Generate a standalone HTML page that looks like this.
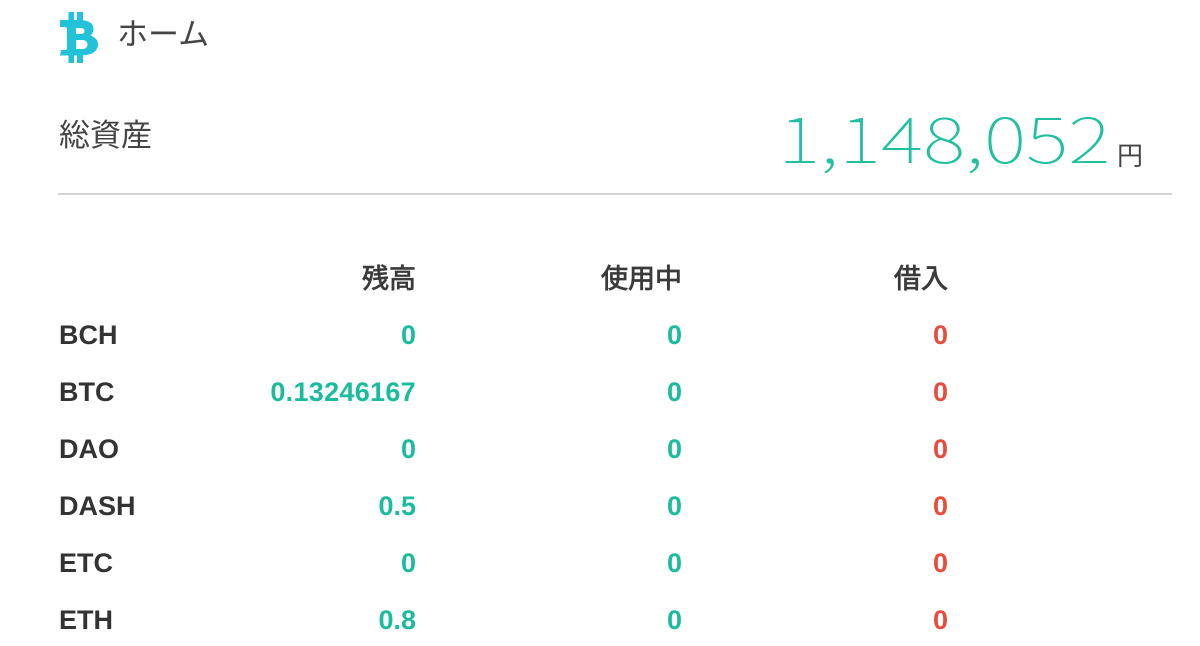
<!DOCTYPE html>
<html lang="ja">
<head>
<meta charset="utf-8">
<style>
html,body{margin:0;padding:0;background:#fff}
body{width:1200px;height:646px;position:relative;overflow:hidden;font-family:"Liberation Sans","Noto Sans CJK JP",sans-serif;color:#333}
.a{position:absolute;white-space:nowrap;line-height:1}
.r{text-align:right}
.b{font-weight:700;font-size:27px}
.h{font-weight:400;font-size:27px;color:#3a3a3a;top:266px;-webkit-text-stroke:.8px #3a3a3a}
.g{color:#1abc9c}
.e{color:#e74c3c}
.c1{left:59px}
.c2{right:784px}
.c3{right:518px}
.c4{right:252px}
</style>
</head>
<body>
<svg class="a" style="left:0;top:0" width="110" height="70" viewBox="0 0 110 70">
<path fill="#22c3d8" fill-rule="evenodd" d="M60 20H68.500V12H74V20H77V12H83V20.300C89.500 21 93.500 24 93.500 29C93.500 32 92 34.500 90.500 35.800C95 37 98 40 98 44.500C98 51 92 55 83 55.300V63H77V55.500H74V63H68.500V55.500H60L61 50H65Q67 50 67 48V29Q67 27 65 27H60ZM76 28V34H80.500C83.500 34 84.500 32.500 84.500 31C84.500 29.500 83.500 28 80.500 28ZM76 40V49H82C85.500 49 87.500 47.300 87.500 44.500C87.500 41.700 85.500 40 82 40Z"/>
</svg>
<div class="a" style="left:117px;top:19px;font-size:31px;font-weight:400;color:#444">ホーム</div>
<div class="a" style="left:59px;top:120px;font-size:31px;font-weight:400;color:#444">総資産</div>
<div class="a g" style="left:778px;top:105px;font-family:'Noto Sans CJK JP','DejaVu Sans',sans-serif;font-size:62px;font-weight:100;color:#1fbf9f;transform:scaleX(1.305);transform-origin:left top">1,148,052</div>
<div class="a" style="left:1117px;top:143px;font-size:26px;font-weight:400;color:#444">円</div>
<div class="a" style="left:58px;top:193px;width:1114px;height:2px;background:#d4d4d4"></div>

<div class="a r h c2">残高</div>
<div class="a r h c3">使用中</div>
<div class="a r h c4">借入</div>

<div class="a b c1" style="top:322px">BCH</div>
<div class="a b c2 r g" style="top:322px">0</div>
<div class="a b c3 r g" style="top:322px">0</div>
<div class="a b c4 r e" style="top:322px">0</div>

<div class="a b c1" style="top:379px">BTC</div>
<div class="a b c2 r g" style="top:379px;letter-spacing:.3px">0.13246167</div>
<div class="a b c3 r g" style="top:379px">0</div>
<div class="a b c4 r e" style="top:379px">0</div>

<div class="a b c1" style="top:436px">DAO</div>
<div class="a b c2 r g" style="top:436px">0</div>
<div class="a b c3 r g" style="top:436px">0</div>
<div class="a b c4 r e" style="top:436px">0</div>

<div class="a b c1" style="top:493px">DASH</div>
<div class="a b c2 r g" style="top:493px">0.5</div>
<div class="a b c3 r g" style="top:493px">0</div>
<div class="a b c4 r e" style="top:493px">0</div>

<div class="a b c1" style="top:550px">ETC</div>
<div class="a b c2 r g" style="top:550px">0</div>
<div class="a b c3 r g" style="top:550px">0</div>
<div class="a b c4 r e" style="top:550px">0</div>

<div class="a b c1" style="top:607px">ETH</div>
<div class="a b c2 r g" style="top:607px">0.8</div>
<div class="a b c3 r g" style="top:607px">0</div>
<div class="a b c4 r e" style="top:607px">0</div>
</body>
</html>
